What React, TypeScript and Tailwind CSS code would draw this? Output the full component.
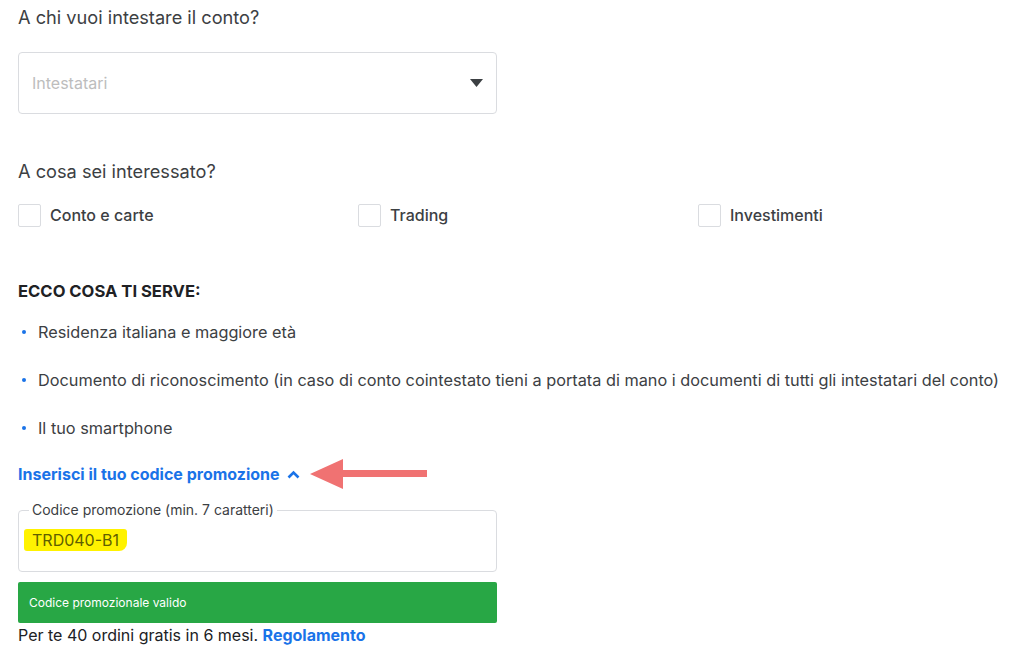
import React from "react";

function Check({ label }: { label: string }) {
  return (
    <div className="flex items-center gap-[9px]">
      <div className="w-[23px] h-[23px] border border-[#dadce0] rounded-[2px] bg-white" />
      <span className="text-[16px] font-medium text-[#3c4043]">{label}</span>
    </div>
  );
}

function Bullet({ children }: { children: React.ReactNode }) {
  return (
    <li className="flex items-center h-[20px]">
      <span className="w-[4px] h-[4px] rounded-full bg-[#1a73e8] ml-[4px] mr-[12px]" />
      <span>{children}</span>
    </li>
  );
}

export default function App() {
  return (
    <div
      className="w-[1024px] h-[669px] bg-white text-[#202124] overflow-hidden"
      style={{ fontFamily: "Inter, 'Open Sans', sans-serif" }}
    >
      <div className="pl-[18px] pt-[4px]">
        <h2 className="text-[18.2px] leading-[26px] text-[#3c4043]">A chi vuoi intestare il conto?</h2>
        <div className="mt-[22px] w-[479px] h-[62px] border border-[#dadce0] rounded-[4px] flex items-center justify-between pl-[13px] pr-[13px]">
          <span className="text-[16px] text-[#bdbdbd]">Intestatari</span>
          <svg width="13" height="9" viewBox="0 0 13 9">
            <path d="M0 0 H13 L6.5 8 Z" fill="#3c4043" />
          </svg>
        </div>

        <h2 className="mt-[44px] text-[18.2px] leading-[26px] text-[#3c4043]">A cosa sei interessato?</h2>
        <div className="mt-[19px] grid grid-cols-[340px_340px_300px]">
          <Check label="Conto e carte" />
          <Check label="Trading" />
          <Check label="Investimenti" />
        </div>

        <h3 className="mt-[53px] text-[16.6px] leading-[22px] font-bold text-[#202124]">ECCO COSA TI SERVE:</h3>
        <ul className="mt-[20px] flex flex-col gap-[28px] text-[16.3px] text-[#3c4043]">
          <Bullet>Residenza italiana e maggiore età</Bullet>
          <Bullet>
            Documento di riconoscimento (in caso di conto cointestato tieni a portata di mano i documenti di tutti gli intestatari del conto)
          </Bullet>
          <Bullet>Il tuo smartphone</Bullet>
        </ul>

        <div className="mt-[20px] flex items-center h-[32px]">
          <span className="text-[16px] font-bold text-[#1a73e8]">Inserisci il tuo codice promozione</span>
          <svg className="ml-[7px]" width="13" height="9" viewBox="0 0 13 9">
            <path d="M1.5 7.5 L6.5 2.5 L11.5 7.5" fill="none" stroke="#1a73e8" strokeWidth="2.6" />
          </svg>
          <svg className="ml-[10px]" width="118" height="32" viewBox="0 0 118 32">
            <path d="M0 16 L33 1 L33 12 L117 12 L117 19 L33 19 L33 31 Z" fill="#f07272" />
          </svg>
        </div>

        <fieldset className="mt-[12px] w-[479px] h-[70px] border border-[#dadce0] rounded-[4px] px-[10px] pt-0">
          <legend className="px-[3px] text-[14px] text-[#3c4043] leading-[16px]">Codice promozione (min. 7 caratteri)</legend>
          <div className="mt-[11px] -ml-[5px] inline-block bg-[#fff200] rounded-[3px] rounded-br-[8px] px-[8px] h-[22px] leading-[22px] text-[16px] text-[#5f5f00]">
            TRD040-B1
          </div>
        </fieldset>

        <div className="mt-[10px] w-[479px] h-[41px] bg-[#28a745] rounded-[2px] flex items-center pl-[11px] text-[12px] text-white">
          Codice promozionale valido
        </div>
        <p className="text-[16px] leading-[24px] text-[#202124]">
          Per te 40 ordini gratis in 6 mesi. <span className="font-bold text-[#1a73e8]">Regolamento</span>
        </p>
      </div>
    </div>
  );
}
